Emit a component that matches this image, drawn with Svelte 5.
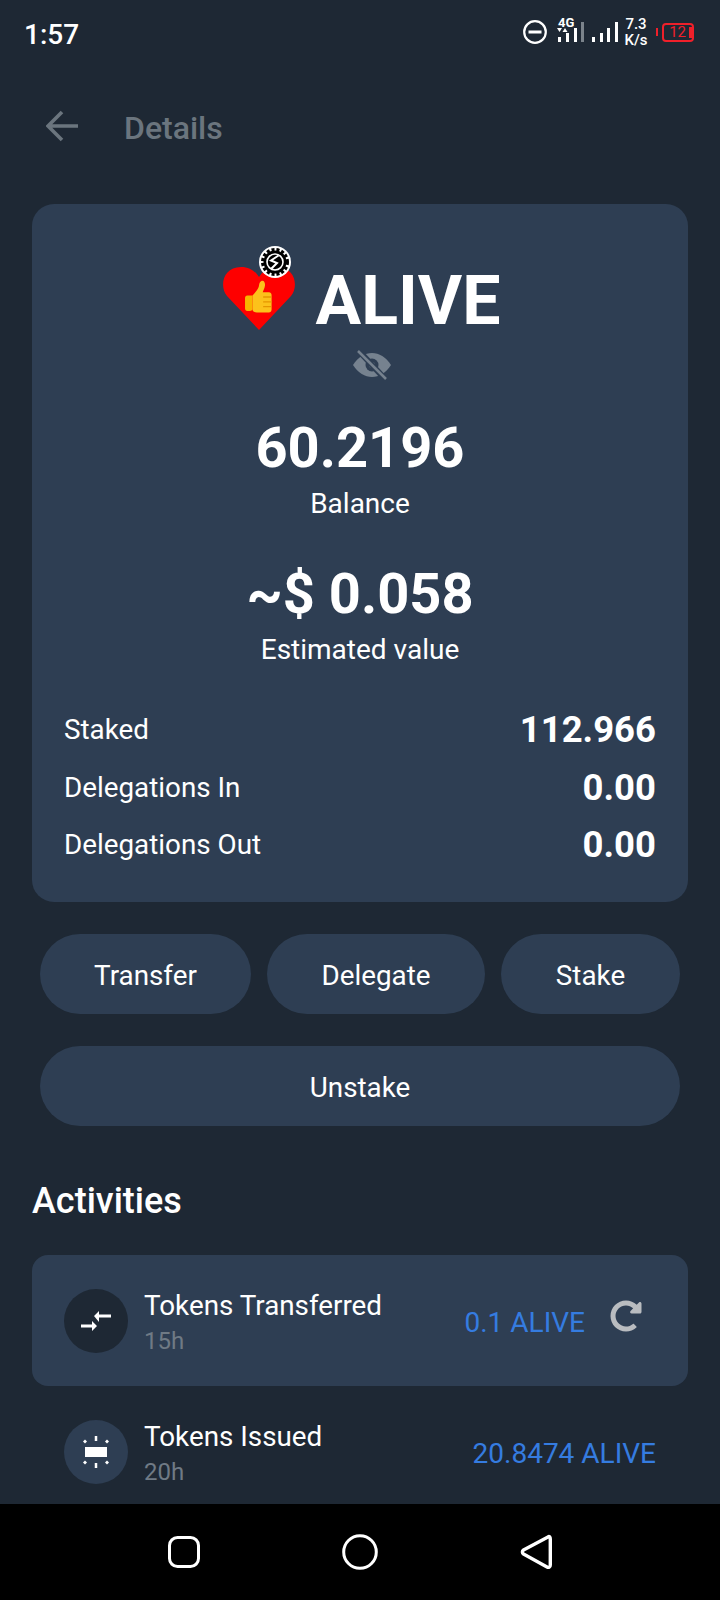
<script lang="ts">
  const stats = [
    { label: "Staked", value: "112.966" },
    { label: "Delegations In", value: "0.00" },
    { label: "Delegations Out", value: "0.00" },
  ];
</script>

<div class="screen">
  <div class="content">
    <div class="status">
      <span class="time">1:57</span>
      <div class="status-icons">
        <svg class="dnd" width="24" height="24" viewBox="0 0 24 24">
          <circle cx="12" cy="12" r="10.800" fill="none" stroke="#fff" stroke-width="2.200" />
          <rect x="5.500" y="10.500" width="13" height="3" fill="#fff" />
        </svg>
        <svg class="sim" width="28" height="28" viewBox="0 0 28 28">
          <text x="1" y="11" class="fourg">4G</text>
          <path d="M0 12h5l-2.500 4zM5.500 16h5L8 12z" fill="#fff" />
          <rect x="1" y="21" width="3" height="5" fill="#fff" />
          <rect x="9" y="17" width="3" height="9" fill="#fff" />
          <rect x="17" y="12" width="3" height="14" fill="#fff" />
          <rect x="24" y="6" width="3" height="20" fill="#7b838b" />
        </svg>
        <svg class="signal" width="26" height="28" viewBox="0 0 26 28">
          <rect x="0" y="21" width="3" height="5" fill="#fff" />
          <rect x="8" y="17" width="3" height="9" fill="#fff" />
          <rect x="15" y="12" width="3" height="14" fill="#fff" />
          <rect x="23" y="6" width="3" height="20" fill="#fff" />
        </svg>
        <div class="speed"><span>7.3</span><span>K/s</span></div>
        <div class="battery">
          <i class="tick"></i>
          <div class="cell"><span>12</span><i></i></div>
        </div>
      </div>
    </div>

    <div class="topbar">
      <svg class="back" width="32" height="32" viewBox="0 0 32 32">
        <path d="M16 2 2 16l14 14M2 16h30" fill="none" stroke="#6b757e" stroke-width="3.600" />
      </svg>
      <span class="topbar-title">Details</span>
    </div>

    <section class="card">
      <div class="token">
        <div class="logo">
          <svg width="72" height="84" viewBox="0 0 72 84">
            <path d="M36 84 4 50C-4 40 0 21 18 21c9 0 15 5 18 10 3-5 9-10 18-10 18 0 22 19 14 29z" fill="#fe0000" />
            <g transform="translate(3 -2.700) scale(.885 .967)">
              <path d="M24 54c-1.500 0-2.500 1-2.500 2.500v11C21.500 69 22.500 70 24 70h3c2 0 3-1 3-2V54z" fill="#f7b500" />
              <path d="M30 54c3-3 6-6 7-9 .5-2 .5-5 3-6 3-1 4.500 2 4 5-.4 2.500-1.500 4.500-2.500 6.500h7c2 0 3 1.500 3 3v15c0 2-1.500 3-3 3H35c-3 0-5-1-5-3z" fill="#fcc21b" />
              <path d="M42 55.500h9M42 60.500h10M42 65.500h9" stroke="#e59600" stroke-width="1.400" fill="none" />
            </g>
          </svg>
          <svg class="badge" width="32" height="32" viewBox="0 0 32 32">
            <circle cx="16" cy="16" r="16" fill="#fff" />
            <circle cx="16" cy="16" r="12.500" fill="none" stroke="#000" stroke-width="3" stroke-dasharray="3 2" />
            <circle cx="16" cy="16" r="11.500" fill="#000" />
            <circle cx="16" cy="16" r="8" fill="none" stroke="#fff" stroke-width="1.600" />
            <path d="M19.500 9.500 12 14.500l6 2.500-5.500 5.500" fill="none" stroke="#fff" stroke-width="2" />
          </svg>
        </div>
        <span class="token-name">ALIVE</span>
      </div>

      <svg class="eye" width="38" height="30" viewBox="0 0 38 30">
        <path d="M0 15C5 7 12 3 19 3s14 4 19 12c-5 8-12 12-19 12S5 23 0 15z" fill="#76828f" />
        <circle cx="19" cy="15" r="6.500" fill="#2e3e53" />
        <circle cx="19" cy="15" r="3" fill="#76828f" />
        <path d="M5 0 33 30" stroke="#2e3e53" stroke-width="6" />
        <path d="M5 1 33 29" stroke="#76828f" stroke-width="2.500" />
      </svg>

      <div class="figure first">
        <strong>60.2196</strong>
        <span>Balance</span>
      </div>
      <div class="figure">
        <strong>~$ 0.058</strong>
        <span>Estimated value</span>
      </div>

      <div class="stats">
        {#each stats as s}
          <div class="stat">
            <span>{s.label}</span>
            <strong>{s.value}</strong>
          </div>
        {/each}
      </div>
    </section>

    <div class="actions">
      <button class="b-transfer">Transfer</button>
      <button class="b-delegate">Delegate</button>
      <button class="b-stake">Stake</button>
      <button class="b-unstake">Unstake</button>
    </div>

    <h2>Activities</h2>

    <div class="activity active">
      <div class="round dark">
        <svg width="32" height="24" viewBox="0 0 32 24">
          <path d="M14 7 19 2v3.500h12v3H19V13z" fill="#fff" />
          <path d="M17 17 12 22v-3.500H1v-3h11V12z" fill="#fff" />
        </svg>
      </div>
      <div class="activity-text">
        <span class="title">Tokens Transferred</span>
        <span class="ago">15h</span>
      </div>
      <span class="amount">0.1 ALIVE</span>
      <svg class="redo" width="32" height="32" viewBox="0 0 512 512">
        <path fill="#b9bcc0" d="M256.455 8c66.269.119 126.437 26.233 170.859 68.685l35.715-35.715C478.149 25.851 504 36.559 504 57.941V192c0 13.255-10.745 24-24 24H345.941c-21.382 0-32.090-25.851-16.971-40.971l41.750-41.750c-30.864-28.899-70.801-44.907-113.230-45.273-92.398-.798-170.283 73.977-169.484 169.442C88.764 348.009 162.184 424 256 424c41.127 0 79.997-14.678 110.629-41.556 4.743-4.161 11.906-3.908 16.368.553l39.662 39.662c4.872 4.872 4.631 12.815-.482 17.433C378.202 479.813 319.926 504 256 504 119.034 504 8.001 392.967 8 256.002 7.999 119.193 119.646 7.755 256.455 8z" />
      </svg>
    </div>

    <div class="activity">
      <div class="round">
        <svg width="30" height="32" viewBox="0 0 30 32">
          <rect x="4" y="11" width="22" height="10" fill="#fff" />
          <rect x="13.750" y="0" width="2.500" height="5" fill="#fff" />
          <rect x="13.750" y="27" width="2.500" height="5" fill="#fff" />
          <path d="M4 3.500 6 5.500 4 7.500 2 5.500zM26 3.500 28 5.500 26 7.500 24 5.500zM4 24.500 6 26.500 4 28.500 2 26.500zM26 24.500 28 26.500 26 28.500 24 26.500z" fill="#fff" />
        </svg>
      </div>
      <div class="activity-text">
        <span class="title">Tokens Issued</span>
        <span class="ago">20h</span>
      </div>
      <span class="amount">20.8474 ALIVE</span>
    </div>
  </div>

  <nav class="navbar">
    <svg width="32" height="32" viewBox="0 0 32 32">
      <rect x="1.500" y="1.500" width="29" height="29" rx="8" fill="none" stroke="#fff" stroke-width="3" />
    </svg>
    <svg width="36" height="36" viewBox="0 0 36 36">
      <circle cx="18" cy="18" r="16.300" fill="none" stroke="#fff" stroke-width="3" />
    </svg>
    <svg width="32" height="36" viewBox="0 0 32 36">
      <path d="M28 3 3.500 16c-1.500 1-1.500 3 0 4L27 33c1.800 1 3.300 0 3.300-2V5c0-2-1-3-2.300-2z" fill="none" stroke="#fff" stroke-width="3.400" stroke-linejoin="round" />
    </svg>
  </nav>
</div>

<style>
  :global(body) {
    margin: 0;
    background: #1e2834;
  }

  .screen {
    width: 720px;
    height: 1600px;
    display: flex;
    flex-direction: column;
    overflow: hidden;
    font-family: Roboto, "Liberation Sans", sans-serif;
    color: #fff;
    background: #1e2834;
  }

  .content {
    height: 1504px;
    overflow: hidden;
    flex-shrink: 0;
  }

  .status {
    height: 64px;
    padding: 0 26px 0 24px;
    display: flex;
    justify-content: space-between;
    align-items: center;
    box-sizing: border-box;
  }

  .time {
    font-size: 28px;
    font-weight: 500;
    margin-top: 4px;
  }

  .status-icons {
    display: flex;
    align-items: center;
  }

  .sim,
  .signal {
    display: block;
    margin-bottom: 4px;
    overflow: visible;
  }

  .sim {
    margin-left: 10px;
  }

  .fourg {
    font-size: 13px;
    font-weight: 700;
    fill: #fff;
    font-family: Roboto, sans-serif;
  }

  .signal {
    margin-left: 7px;
  }

  .speed {
    margin-left: 6px;
    width: 24px;
    display: flex;
    flex-direction: column;
    align-items: center;
    font-size: 15px;
    line-height: 16px;
    font-weight: 500;
  }

  .battery {
    margin-left: 8px;
    display: flex;
    align-items: center;
  }

  .tick {
    width: 2px;
    height: 8px;
    margin-right: 4px;
    background: #f0202a;
  }

  .cell {
    width: 32px;
    height: 19px;
    box-sizing: border-box;
    border: 2px solid #f0202a;
    border-radius: 4px;
    color: #f0202a;
    font-size: 15px;
    display: flex;
    align-items: center;
    justify-content: flex-end;
    gap: 3px;
  }

  .cell i {
    width: 3px;
    height: 11px;
    background: #f0202a;
  }

  .topbar {
    height: 64px;
    margin-top: 32px;
    padding-left: 46px;
    display: flex;
    align-items: center;
    gap: 46px;
  }

  .back {
    margin-bottom: 4px;
  }

  .topbar-title {
    font-size: 32px;
    font-weight: 500;
    color: #6b757e;
  }

  .card {
    margin: 44px 32px 0;
    height: 698px;
    box-sizing: border-box;
    padding: 42px 32px 0;
    background: #2e3e53;
    border-radius: 22px;
    display: flex;
    flex-direction: column;
    align-items: center;
  }

  .token {
    display: flex;
    align-items: flex-start;
    height: 84px;
    gap: 20px;
    margin-left: 4px;
  }

  .logo {
    position: relative;
    width: 72px;
    height: 84px;
  }

  .badge {
    position: absolute;
    top: 0;
    left: 36px;
  }

  .token-name {
    font-size: 68px;
    font-weight: 700;
    line-height: 84px;
    margin-top: 13px;
  }

  .eye {
    margin-top: 20px;
    margin-left: 24px;
    flex-shrink: 0;
  }

  .figure {
    display: flex;
    flex-direction: column;
    align-items: center;
    margin-top: 38px;
    align-self: stretch;
  }

  .figure.first {
    margin-top: 34px;
  }

  .figure strong {
    font-size: 56px;
    line-height: 68px;
    font-weight: 700;
    margin-bottom: 4px;
  }

  .figure span {
    font-size: 28px;
    line-height: 36px;
  }

  .stats {
    align-self: stretch;
    margin-top: 40px;
    display: flex;
    flex-direction: column;
    gap: 14.500px;
  }

  .stat {
    display: flex;
    justify-content: space-between;
    align-items: center;
    height: 43px;
    font-size: 27.800px;
  }

  .stat strong {
    font-size: 36.500px;
    font-weight: 700;
  }

  .actions {
    margin: 32px 40px 0;
    display: grid;
    grid-template-columns: 211px 218px 179px;
    column-gap: 16px;
    row-gap: 32px;
    justify-content: space-between;
  }

  .actions button {
    height: 80px;
    border: 0;
    border-radius: 40px;
    padding: 2px 0 0;
    background: #2e3e53;
    color: #fff;
    font: 400 27.800px Roboto, sans-serif;
  }

  .b-unstake {
    grid-column: 1 / -1;
  }

  h2 {
    margin: 53px 32px 0;
    font-size: 36px;
    line-height: 44px;
    font-weight: 500;
  }

  .activity {
    margin: 32px 32px 0;
    height: 131px;
    padding: 0 32px;
    box-sizing: border-box;
    display: flex;
    align-items: center;
    border-radius: 16px;
  }

  .activity + .activity {
    margin-top: 0;
  }

  .activity.active {
    background: #2e3e53;
    padding-right: 46px;
  }

  .round {
    width: 64px;
    height: 64px;
    border-radius: 50%;
    background: #2e3e53;
    display: flex;
    align-items: center;
    justify-content: center;
    flex-shrink: 0;
  }

  .round.dark {
    background: #1e2834;
  }

  .activity-text {
    margin-left: 16px;
    margin-top: 6px;
    flex: 1;
    display: flex;
    flex-direction: column;
  }

  .title {
    font-size: 27.800px;
    line-height: 36px;
  }

  .ago {
    font-size: 24px;
    line-height: 35px;
    color: #6f7a85;
  }

  .amount {
    font-size: 28px;
    margin-top: 3px;
    color: #357ce0;
  }

  .redo {
    margin-left: 25px;
    margin-top: -10px;
  }

  .navbar {
    height: 96px;
    background: #000;
    flex-shrink: 0;
    display: flex;
    align-items: center;
    justify-content: center;
    gap: 142px;
  }
</style>
